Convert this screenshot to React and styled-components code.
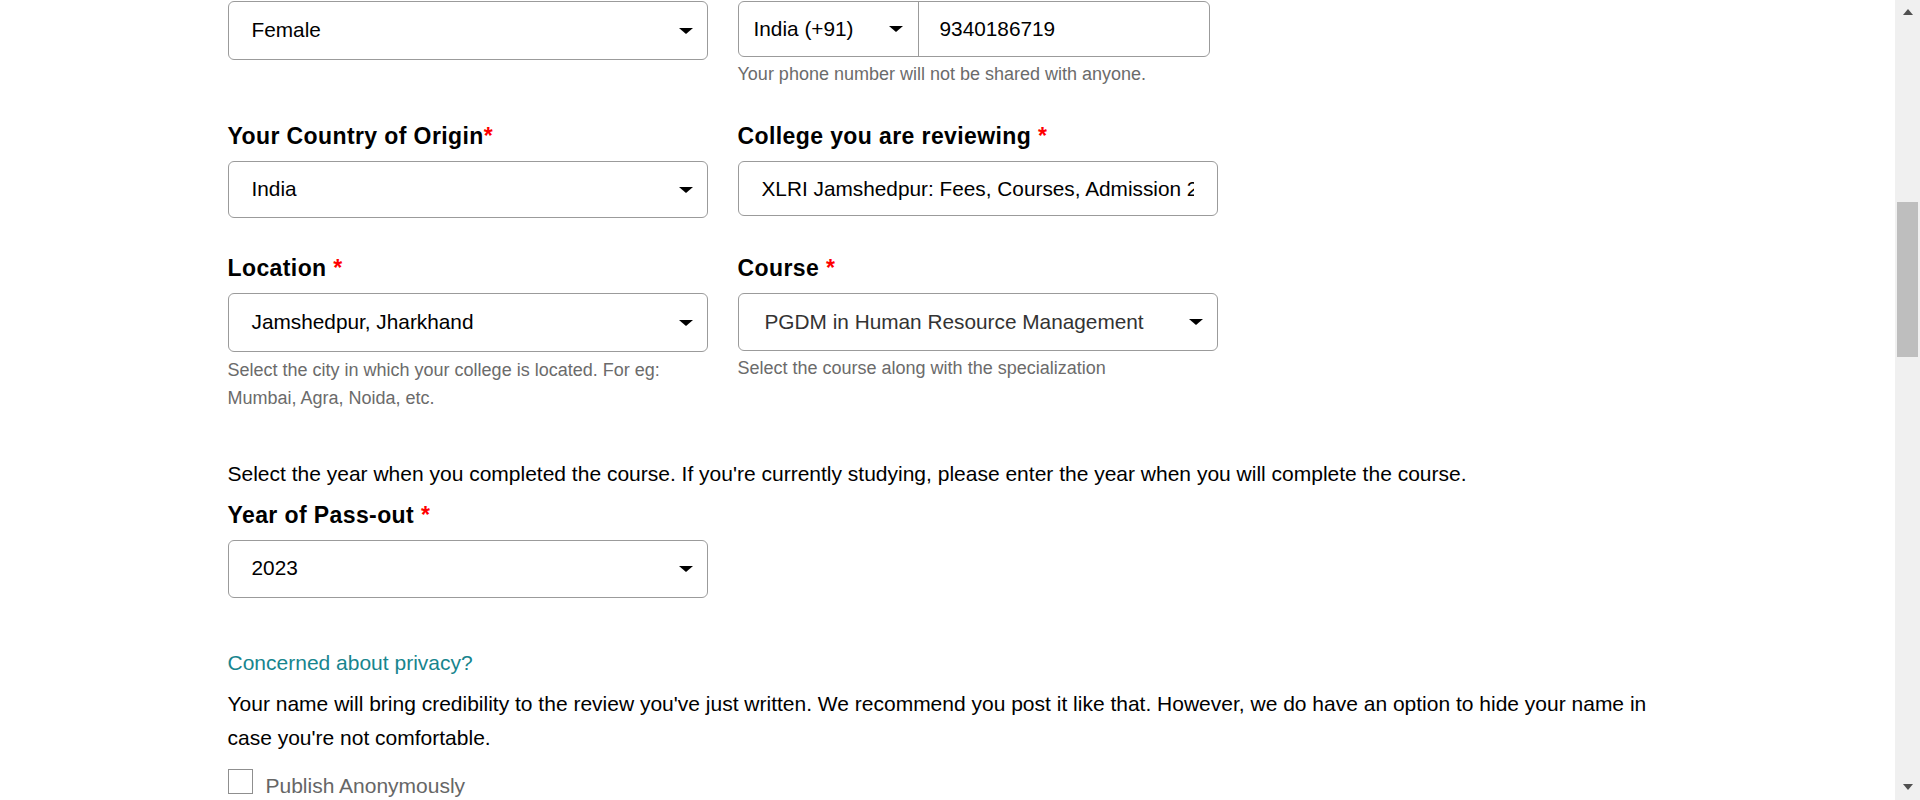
import React from 'react';
import styled, { createGlobalStyle } from 'styled-components';

const GlobalStyle = createGlobalStyle`
  html, body { margin: 0; padding: 0; background: #fff; }
  body {
    font-family: "Liberation Sans", Arial, Helvetica, sans-serif;
    color: #000;
    overflow: hidden;
  }
  *, *::before, *::after { box-sizing: border-box; }
`;

const Viewport = styled.div`
  display: flex;
  width: 1920px;
  height: 800px;
`;

const Main = styled.main`
  flex: 1;
  min-width: 0;
`;

const Container = styled.div`
  max-width: 1440px;
  margin: 0 auto;
  padding-top: 1px;
  font-size: 21px;
  line-height: 1.6;
`;

const FieldRow = styled.div`
  display: grid;
  grid-template-columns: 480px 480px;
  column-gap: 30px;
  align-items: start;
  margin-top: ${(p) => p.$mt || 0}px;
`;

const Field = styled.div`
  display: flex;
  flex-direction: column;
  align-items: flex-start;
  margin-top: ${(p) => p.$mt || 0}px;
`;

const Label = styled.label`
  font-size: 23px;
  font-weight: 700;
  line-height: 26px;
  letter-spacing: 0.4px;
  margin-bottom: 12px;
  color: #000;
`;

const Req = styled.span`
  color: #ff0000;
`;

const SelectBox = styled.div`
  width: 480px;
  height: ${(p) => p.$h || 58}px;
  display: flex;
  align-items: center;
  justify-content: space-between;
  padding: 0 14px 0 ${(p) => p.$pl || 23}px;
  border: 1px solid #9b9b9b;
  border-radius: 6px;
  background: #fff;
  font-size: 20.8px;
  line-height: 1;
  color: ${(p) => p.$color || '#000'};
`;

const Caret = styled.span`
  flex: none;
  width: 0;
  height: 0;
  border-left: 7px solid transparent;
  border-right: 7px solid transparent;
  border-top: 6px solid #000;
`;

const Helper = styled.div`
  font-size: 18px;
  line-height: 28px;
  color: #6b6b6b;
  margin-top: ${(p) => p.$mt || 0}px;
`;

const PhoneGroup = styled.div`
  display: flex;
  width: 472px;
  height: 56px;
  border: 1px solid #9b9b9b;
  border-radius: 6px;
  overflow: hidden;
  background: #fff;
`;

const CodePart = styled.div`
  flex: none;
  width: 180px;
  display: flex;
  align-items: center;
  justify-content: space-between;
  padding: 0 15px;
  border-right: 1px solid #9b9b9b;
  font-size: 20.8px;
  line-height: 1;
  color: #000;
`;

const PhoneInput = styled.input`
  flex: 1;
  min-width: 0;
  border: none;
  outline: none;
  padding: 0 0 0 21px;
  font-family: "Liberation Sans", Arial, sans-serif;
  font-size: 20.8px;
  color: #000;
  background: transparent;
`;

const TextInput = styled.input`
  width: 480px;
  height: ${(p) => p.$h || 55}px;
  border: 1px solid #9b9b9b;
  border-radius: 6px;
  padding: 0 23px;
  outline: none;
  font-family: "Liberation Sans", Arial, sans-serif;
  font-size: 20.8px;
  color: #000;
  background: #fff;
`;

const Note = styled.p`
  margin: ${(p) => p.$mt || 0}px 0 0;
  color: #000;
`;

const PrivacyLink = styled.a`
  display: block;
  margin-top: ${(p) => p.$mt || 0}px;
  color: #17858e;
  text-decoration: none;
`;

const CheckRow = styled.label`
  display: flex;
  align-items: flex-start;
  gap: 13px;
  margin-top: ${(p) => p.$mt || 0}px;
  color: #666;
`;

const CheckSquare = styled.span`
  flex: none;
  width: 25px;
  height: 25px;
  border: 1px solid #8f8f8f;
  background: #fff;
`;

const ScrollTrack = styled.div`
  flex: none;
  width: 25px;
  height: 800px;
  background: #f0f0f0;
  display: flex;
  flex-direction: column;
  align-items: center;
  padding: 9px 0 10px;
`;

const ArrowUp = styled.span`
  width: 0;
  height: 0;
  border-left: 5.5px solid transparent;
  border-right: 5.5px solid transparent;
  border-bottom: 6px solid #505050;
`;

const ArrowDown = styled.span`
  width: 0;
  height: 0;
  border-left: 5.5px solid transparent;
  border-right: 5.5px solid transparent;
  border-top: 6px solid #505050;
`;

const Thumb = styled.div`
  width: 21px;
  height: 155px;
  margin-top: 187px;
  background: #bebebe;
`;

const TrackSpacer = styled.div`
  flex: 1;
`;

function Select({ value, h, pl, color }) {
  return (
    <SelectBox $h={h} $pl={pl} $color={color}>
      <span>{value}</span>
      <Caret />
    </SelectBox>
  );
}

export default function App() {
  return (
    <>
      <GlobalStyle />
      <Viewport>
        <Main>
          <Container>
            <FieldRow>
              <Field>
                <Select value="Female" h={59} />
              </Field>
              <Field>
                <PhoneGroup>
                  <CodePart>
                    <span>India (+91)</span>
                    <Caret />
                  </CodePart>
                  <PhoneInput readOnly value="9340186719" />
                </PhoneGroup>
                <Helper $mt={3}>Your phone number will not be shared with anyone.</Helper>
              </Field>
            </FieldRow>

            <FieldRow $mt={35}>
              <Field>
                <Label>
                  Your Country of Origin<Req>*</Req>
                </Label>
                <Select value="India" h={57} />
              </Field>
              <Field>
                <Label>
                  College you are reviewing <Req>*</Req>
                </Label>
                <TextInput
                  readOnly
                  value="XLRI Jamshedpur: Fees, Courses, Admission 2024, Cutoff, Ranking, Placements"
                />
              </Field>
            </FieldRow>

            <FieldRow $mt={37}>
              <Field>
                <Label>
                  Location <Req>*</Req>
                </Label>
                <Select value="Jamshedpur, Jharkhand" h={59} />
                <Helper $mt={4}>
                  Select the city in which your college is located. For eg:
                  <br />
                  Mumbai, Agra, Noida, etc.
                </Helper>
              </Field>
              <Field>
                <Label>
                  Course <Req>*</Req>
                </Label>
                <Select value="PGDM in Human Resource Management" h={58} pl={26} color="#333" />
                <Helper $mt={3}>Select the course along with the specialization</Helper>
              </Field>
            </FieldRow>

            <Note $mt={45}>
              Select the year when you completed the course. If you're currently studying, please enter the year when you will complete the course.
            </Note>
            <Field $mt={11}>
              <Label>
                Year of Pass-out <Req>*</Req>
              </Label>
              <Select value="2023" h={58} />
            </Field>

            <PrivacyLink $mt={48} href="#privacy">
              Concerned about privacy?
            </PrivacyLink>
            <Note $mt={8}>
              Your name will bring credibility to the review you've just written. We recommend you post it like that. However, we do have an option to hide your name in case you're not comfortable.
            </Note>
            <CheckRow $mt={15}>
              <CheckSquare />
              <span>Publish Anonymously</span>
            </CheckRow>
          </Container>
        </Main>
        <ScrollTrack>
          <ArrowUp />
          <Thumb />
          <TrackSpacer />
          <ArrowDown />
        </ScrollTrack>
      </Viewport>
    </>
  );
}
